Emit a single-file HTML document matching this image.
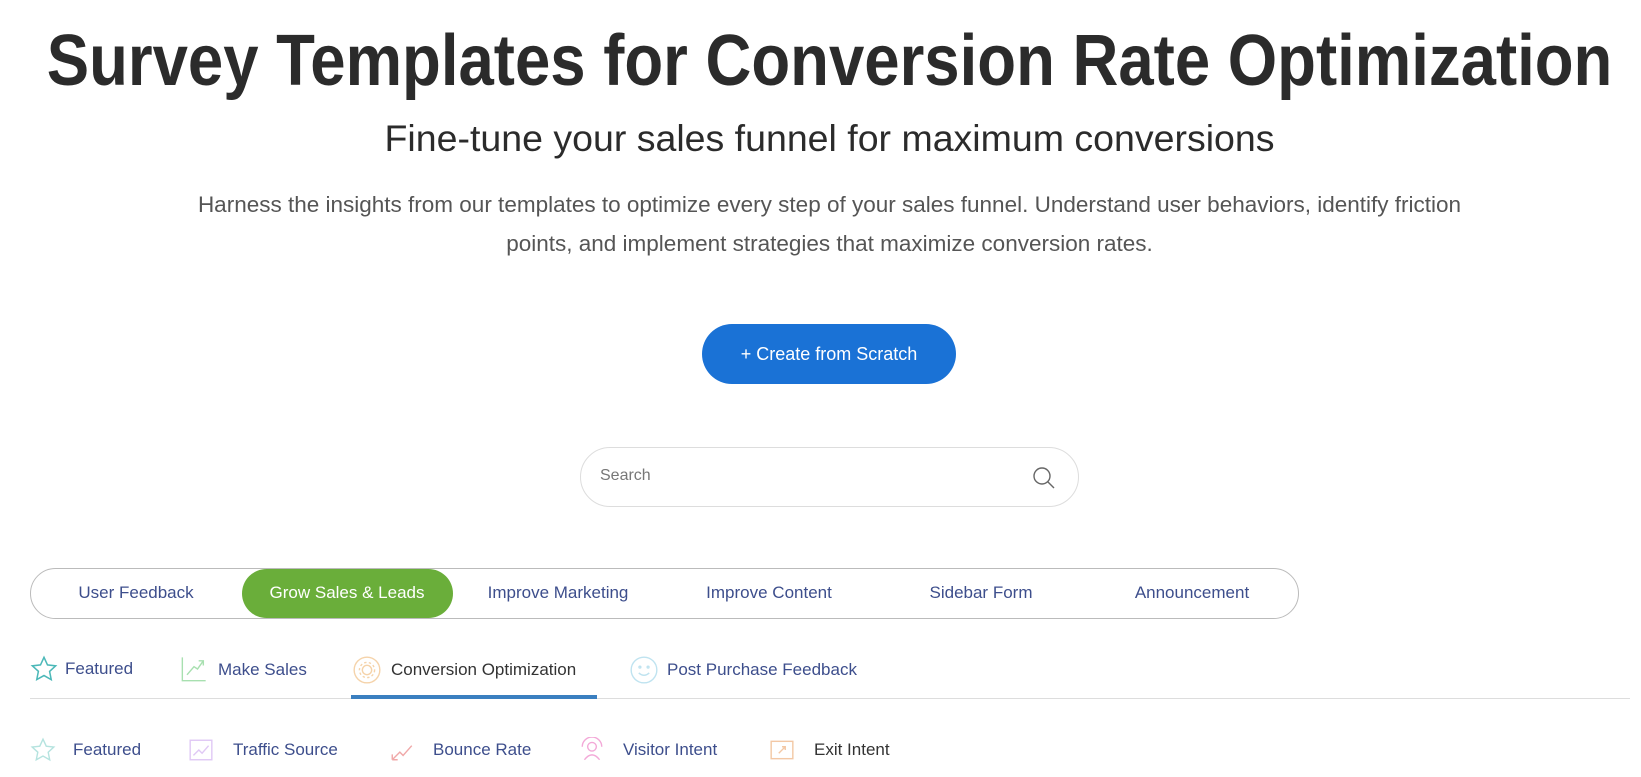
<!DOCTYPE html>
<html><head><meta charset="utf-8"><style>
*{margin:0;padding:0;box-sizing:border-box}
body{width:1641px;height:777px;overflow:hidden;background:#fff;font-family:"Liberation Sans",sans-serif;position:relative}
.a{position:absolute;white-space:nowrap}
.c{left:-491px;width:2641px;text-align:center}
.sx{display:inline-block;transform-origin:center}
h1{font-size:72px;font-weight:bold;color:#2b2b2b}
.nav{color:#3d4e8c;font-size:17px}
.ic{position:absolute}
</style></head><body>
<div class="a c" style="top:20px"><h1><span class="sx" style="transform:scaleX(.882)">Survey Templates for Conversion Rate Optimization</span></h1></div>
<div class="a c" style="top:117px;font-size:37.5px;color:#2b2b2b">Fine-tune your sales funnel for maximum conversions</div>
<div class="a c" style="top:185px;font-size:22.5px;color:#555;line-height:39px">Harness the insights from our templates to optimize every step of your sales funnel. Understand user behaviors, identify friction<br>points, and implement strategies that maximize conversion rates.</div>
<div class="a" style="left:702px;top:324px;width:254px;height:60px;border-radius:30px;background:#1a72d6;color:#fff;font-size:18px;text-align:center;line-height:60px">+ Create from Scratch</div>
<div class="a" style="left:580px;top:447px;width:499px;height:60px;border-radius:30px;border:1px solid #ddd;">
<span class="a" style="left:19px;top:19px;font-size:16px;color:#777">Search</span>
<svg class="ic" style="left:451px;top:18px" width="24" height="24" viewBox="0 0 24 24" fill="none" stroke="#666" stroke-width="1.4"><circle cx="10" cy="10" r="8"/><path d="M16 16l6 6"/></svg>
</div>
<div class="a" style="left:30px;top:568px;width:1269px;height:51px;border-radius:26px;border:1.5px solid #bbb"></div>
<div class="a" style="left:242px;top:569px;width:211px;height:49px;border-radius:25px;background:#6aae3a"></div>
<div class="a nav" style="left:36px;top:583px;width:200px;text-align:center">User Feedback</div>
<div class="a nav" style="left:247px;top:583px;width:200px;text-align:center;color:#fff">Grow Sales &amp; Leads</div>
<div class="a nav" style="left:458px;top:583px;width:200px;text-align:center">Improve Marketing</div>
<div class="a nav" style="left:669px;top:583px;width:200px;text-align:center">Improve Content</div>
<div class="a nav" style="left:881px;top:583px;width:200px;text-align:center">Sidebar Form</div>
<div class="a nav" style="left:1092px;top:583px;width:200px;text-align:center">Announcement</div>

<svg class="ic" style="left:30px;top:655px" width="28" height="28" viewBox="0 0 24 24" fill="none" stroke="#4bb8b8" stroke-width="1.3"><path d="M12 2l3 6.5 7 .8-5.2 4.8 1.4 7L12 17.6 5.8 21l1.4-7L2 9.3l7-.8z"/></svg>
<div class="a nav" style="left:65px;top:659px">Featured</div>
<svg class="ic" style="left:180px;top:655px" width="28" height="28" viewBox="0 0 24 24" fill="none" stroke="#a8e0b0" stroke-width="1.2"><path d="M2 2v20h20M6 17l6-7 3 2 5-7M16 5h4v4"/></svg>
<div class="a nav" style="left:218px;top:660px">Make Sales</div>
<svg class="ic" style="left:353px;top:656px" width="28" height="28" viewBox="0 0 24 24" fill="none" stroke="#f5d3aa" stroke-width="1.2"><circle cx="12" cy="12" r="11"/><circle cx="12" cy="12" r="4"/><circle cx="12" cy="12" r="6.5" stroke-dasharray="2 2"/></svg>
<div class="a nav" style="left:391px;top:660px;color:#333">Conversion Optimization</div>
<svg class="ic" style="left:630px;top:656px" width="28" height="28" viewBox="0 0 24 24" fill="none" stroke="#bfe3f0" stroke-width="1.2"><circle cx="12" cy="12" r="11"/><circle cx="8.5" cy="9.5" r=".8"/><circle cx="15.5" cy="9.5" r=".8"/><path d="M7.5 14.5q4.5 4 9 0"/></svg>
<div class="a nav" style="left:667px;top:660px">Post Purchase Feedback</div>
<div class="a" style="left:30px;top:698px;width:1600px;height:1px;background:#ddd"></div>
<div class="a" style="left:351px;top:695px;width:246px;height:4px;background:#3a7fc0"></div>

<svg class="ic" style="left:30px;top:737px" width="26" height="26" viewBox="0 0 24 24" fill="none" stroke="#b5e3df" stroke-width="1.3"><path d="M12 2l3 6.5 7 .8-5.2 4.8 1.4 7L12 17.6 5.8 21l1.4-7L2 9.3l7-.8z"/></svg>
<div class="a nav" style="left:73px;top:740px">Featured</div>
<svg class="ic" style="left:188px;top:737px" width="26" height="26" viewBox="0 0 24 24" fill="none" stroke="#e0c8f5" stroke-width="1.3"><rect x="2" y="3" width="20" height="18"/><path d="M5 17l5-5 3 3 6-7"/></svg>
<div class="a nav" style="left:233px;top:740px">Traffic Source</div>
<svg class="ic" style="left:389px;top:737px" width="26" height="26" viewBox="0 0 24 24" fill="none" stroke="#f0a8a8" stroke-width="1.3"><path d="M3 21l7-7 3 3 8-9M3 21v-5M3 21h5"/></svg>
<div class="a nav" style="left:433px;top:740px">Bounce Rate</div>
<svg class="ic" style="left:579px;top:737px" width="26" height="26" viewBox="0 0 24 24" fill="none" stroke="#f3a9d8" stroke-width="1.3"><circle cx="12" cy="9" r="4"/><path d="M5 21q7-9 14 0M3 9a9 9 0 0 1 18 0"/></svg>
<div class="a nav" style="left:623px;top:740px">Visitor Intent</div>
<svg class="ic" style="left:769px;top:737px" width="26" height="26" viewBox="0 0 24 24" fill="none" stroke="#f3c8a5" stroke-width="1.3"><rect x="2" y="4" width="20" height="16"/><path d="M9 15l6-6M12 9h3v3"/></svg>
<div class="a nav" style="left:814px;top:740px;color:#333">Exit Intent</div>
</body></html>
